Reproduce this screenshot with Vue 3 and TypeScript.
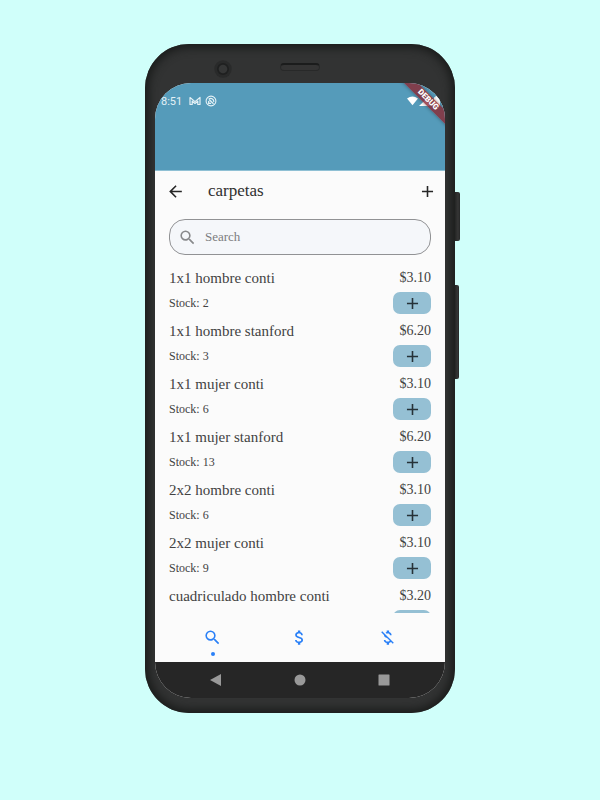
<script setup lang="ts">
import { ref } from 'vue'

interface Product {
  name: string
  price: number
  stock?: number
}

const title = 'carpetas'
const query = ref('')
const products = ref<Product[]>([
  { name: '1x1 hombre conti', stock: 2, price: 3.1 },
  { name: '1x1 hombre stanford', stock: 3, price: 6.2 },
  { name: '1x1 mujer conti', stock: 6, price: 3.1 },
  { name: '1x1 mujer stanford', stock: 13, price: 6.2 },
  { name: '2x2 hombre conti', stock: 6, price: 3.1 },
  { name: '2x2 mujer conti', stock: 9, price: 3.1 },
  { name: 'cuadriculado hombre conti', price: 3.2 },
])

const icons = {
  back: 'M20 11H7.83l5.59-5.59L12 4l-8 8 8 8 1.41-1.41L7.83 13H20v-2z',
  add: 'M19 13h-6v6h-2v-6H5v-2h6V5h2v6h6v2z',
  search:
    'M15.5 14h-.79l-.28-.27A6.471 6.471 0 0 0 16 9.5 6.5 6.5 0 1 0 9.5 16c1.61 0 3.09-.59 4.23-1.57l.27.28v.79l5 4.99L20.49 19l-4.99-5zm-6 0C7.01 14 5 11.99 5 9.5S7.01 5 9.5 5 14 7.01 14 9.5 11.99 14 9.5 14z',
  money:
    'M11.8 10.9c-2.27-.59-3-1.2-3-2.15 0-1.09 1.01-1.85 2.7-1.85 1.78 0 2.44.85 2.5 2.1h2.21c-.07-1.72-1.12-3.3-3.21-3.81V3h-3v2.16c-1.94.42-3.5 1.68-3.5 3.61 0 2.31 1.91 3.46 4.7 4.13 2.5.6 3 1.48 3 2.41 0 .69-.49 1.79-2.7 1.79-2.06 0-2.87-.92-2.98-2.1h-2.2c.12 2.19 1.76 3.42 3.68 3.83V21h3v-2.15c1.95-.37 3.5-1.5 3.5-3.55 0-2.84-2.43-3.81-4.7-4.4z',
  moneyOff:
    'M12.5 6.9c1.78 0 2.44.85 2.5 2.1h2.21c-.07-1.72-1.12-3.3-3.21-3.81V3h-3v2.16c-.53.12-1.03.3-1.48.54l1.47 1.47c.41-.17.91-.27 1.51-.27zM5.33 4.06L4.06 5.33 7.5 8.77c0 2.08 1.56 3.21 3.91 3.91l3.51 3.51c-.34.48-1.05.91-2.42.91-2.06 0-2.87-.92-2.98-2.1h-2.2c.12 2.19 1.76 3.42 3.68 3.83V21h3v-2.15c.96-.18 1.82-.55 2.45-1.12l2.22 2.22 1.27-1.27L5.33 4.06z',
}

const tabs = [
  { label: 'Buscar', icon: icons.search },
  { label: 'Ventas', icon: icons.money },
  { label: 'Gastos', icon: icons.moneyOff },
]
const activeTab = ref(0)

function addStock(product: Product) {
  product.stock = (product.stock ?? 0) + 1
}
</script>

<template>
  <main class="page">
    <div class="phone">
      <span class="side-button power"></span>
      <span class="side-button volume"></span>

      <div class="bezel-top">
        <svg class="camera" viewBox="0 0 18 18" aria-hidden="true">
          <circle cx="9" cy="9" r="8.700" fill="#292a2a" />
          <circle cx="9" cy="9" r="6" fill="#1f2020" />
          <circle cx="9" cy="9" r="4.300" fill="#353636" />
        </svg>
        <span class="speaker"></span>
      </div>

      <div class="screen">
        <header class="status">
          <span class="clock">8:51</span>
          <svg class="notice" viewBox="0 0 12 12" aria-hidden="true">
            <path d="M1 9.500V2.500L6 6.600l5-4.100v7H8.800V6.200L6 8.500 3.200 6.200v3.300z" fill="none" stroke="#e4f1f6" stroke-width="1.200" stroke-linejoin="round" />
          </svg>
          <svg class="notice" viewBox="0 0 12 12" aria-hidden="true">
            <circle cx="6" cy="6" r="4.900" fill="none" stroke="#e4f1f6" stroke-width="1.100" />
            <path d="M3.800 4.300A2.900 2.900 0 0 1 8.700 6.800M3.800 4.300l4.700 4.400M3.700 6v2.300h2.400" fill="none" stroke="#e4f1f6" stroke-width="1.300" />
          </svg>
          <svg class="signals" viewBox="0 0 34 12" aria-hidden="true">
            <path d="M0 3.500Q5.500-.5 11 3.500L5.500 10.200z" fill="#fff" />
            <path d="M12 11L22.500 1v10z" fill="#fff" />
            <path d="M27 2.200h1.500V1h3v1.200H33V11h-6z" fill="#fff" />
          </svg>
          <span class="ribbon">DEBUG</span>
        </header>

        <div class="toolbar">
          <button class="icon-button" type="button" aria-label="Volver">
            <svg class="icon" viewBox="0 0 24 24"><path :d="icons.back" /></svg>
          </button>
          <h1 class="title">{{ title }}</h1>
          <button class="icon-button" type="button" aria-label="Nuevo">
            <svg class="icon" viewBox="0 0 24 24"><path :d="icons.add" /></svg>
          </button>
        </div>

        <label class="search">
          <svg class="icon" viewBox="0 0 24 24" aria-hidden="true"><path :d="icons.search" /></svg>
          <input v-model="query" class="search-input" type="text" placeholder="Search" aria-label="Search" />
        </label>

        <ul class="products">
          <li v-for="product in products" :key="product.name" class="product">
            <span class="name">{{ product.name }}</span>
            <span class="price">${{ product.price.toFixed(2) }}</span>
            <span class="stock"><template v-if="product.stock !== undefined">Stock: {{ product.stock }}</template></span>
            <button class="add" type="button" :aria-label="'Agregar ' + product.name" @click="addStock(product)">
              <svg class="icon" viewBox="0 0 24 24"><path :d="icons.add" /></svg>
            </button>
          </li>
        </ul>

        <nav class="tabs">
          <button
            v-for="(tab, index) in tabs"
            :key="tab.label"
            class="tab"
            :class="{ active: index === activeTab }"
            type="button"
            :aria-label="tab.label"
            @click="activeTab = index"
          >
            <svg class="icon" viewBox="0 0 24 24"><path :d="tab.icon" /></svg>
            <span class="dot"></span>
          </button>
        </nav>

        <div class="system">
          <svg class="key" viewBox="0 0 12 12" aria-hidden="true"><path d="M11 0v12L0 6z" /></svg>
          <svg class="key" viewBox="0 0 12 12" aria-hidden="true"><circle cx="6" cy="6" r="5.500" /></svg>
          <svg class="key" viewBox="0 0 12 12" aria-hidden="true"><rect x=".5" y=".5" width="11" height="11" rx=".5" /></svg>
        </div>
      </div>
    </div>
  </main>
</template>

<style>
body {
  margin: 0;
  background: #d0fffa;
}
</style>

<style scoped>
.page {
  box-sizing: border-box;
  display: flex;
  justify-content: center;
  height: 100vh;
  min-height: 480px;
  padding: 44px 16px 87px;
  font-family: 'Liberation Serif', 'Times New Roman', serif;
  color: #424242;
}

button {
  display: flex;
  align-items: center;
  justify-content: center;
  padding: 0;
  border: 0;
  background: none;
  color: inherit;
}

.phone {
  position: relative;
  box-sizing: border-box;
  display: flex;
  flex-direction: column;
  width: 100%;
  max-width: 310px;
  padding: 0 10px 15px;
  border-radius: 44px;
  background: #323333;
  box-shadow: inset 0 0 8px 4px #1b1d1c;
}

.side-button {
  position: absolute;
  left: 100%;
  width: 4px;
  border-radius: 0 2px 2px 0;
  background: linear-gradient(90deg, #242524, #363636 60%, #262727);
}

.power {
  top: 148px;
  width: 5px;
  height: 49px;
}

.volume {
  top: 241px;
  height: 94px;
}

.bezel-top {
  display: grid;
  grid-template-columns: 1fr 40px 1fr;
  align-items: center;
  height: 39px;
}

.camera {
  width: 18px;
  height: 18px;
  margin: 11px 0 0 59px;
}

.speaker {
  box-sizing: border-box;
  height: 8px;
  margin-top: 7px;
  border: 1px solid #282929;
  border-top: 2px solid #1b1c1c;
  border-radius: 4px;
  background: #343434;
}

.screen {
  flex: 1;
  display: flex;
  flex-direction: column;
  min-height: 0;
  overflow: hidden;
  border-radius: 36px;
  background: #fbfbfb;
}

.status {
  position: relative;
  box-sizing: border-box;
  flex: none;
  display: flex;
  align-items: flex-start;
  height: 88px;
  padding: 12px 4px 0 6px;
  overflow: hidden;
  border-bottom: 1px solid #8fc0d4;
  background: #559bba;
}

.clock {
  width: 28px;
  font: 11px/13px Roboto, sans-serif;
  color: #e4f1f6;
}

.notice {
  width: 12px;
  height: 12px;
  margin-right: 4px;
}

.signals {
  width: 34px;
  height: 12px;
  margin-left: auto;
}

.ribbon {
  position: absolute;
  top: 12px;
  right: -23px;
  width: 80px;
  background: rgba(139, 40, 50, 0.8);
  box-shadow: 0 0 4px rgba(0, 0, 0, 0.4);
  color: #fff;
  font: 900 8px/10px Roboto, sans-serif;
  text-align: center;
  transform: rotate(45deg);
}

.icon {
  display: block;
  flex: none;
  width: 19px;
  height: 19px;
  fill: currentColor;
}

.toolbar {
  flex: none;
  display: flex;
  align-items: center;
  height: 40px;
  padding: 0 8px 0 11px;
  color: #262626;
}

.icon-button {
  width: 19px;
  height: 32px;
}

.title {
  flex: 1;
  margin: 0 0 0 23px;
  font-size: 17px;
  line-height: 24px;
  font-weight: 400;
  color: #303030;
}

.search {
  box-sizing: border-box;
  flex: none;
  display: flex;
  align-items: center;
  gap: 8px;
  height: 36px;
  margin: 8px 14px 0;
  padding: 0 8px;
  border: 1px solid #919294;
  border-radius: 16px;
  background: #f5f7fa;
  color: #88898b;
}

.search-input {
  flex: 1;
  min-width: 0;
  padding: 0;
  border: 0;
  outline: 0;
  background: none;
  font: inherit;
  font-size: 13px;
  color: #3c3c3c;
}

.search-input::placeholder {
  color: #7c7d7f;
  opacity: 1;
}

.products {
  flex: 1;
  min-height: 0;
  margin: 11px 0 0;
  padding: 0 14px;
  overflow: hidden;
  list-style: none;
}

.product {
  display: grid;
  grid-template-columns: 1fr auto;
  grid-template-rows: 24px 22px;
  row-gap: 2px;
  align-items: center;
  margin-bottom: 5px;
}

.name {
  font-size: 15px;
}

.price {
  font-size: 14px;
  text-align: right;
}

.stock {
  font-size: 12px;
}

.add {
  justify-self: end;
  width: 38px;
  height: 22px;
  border-radius: 7px;
  background: #95c0d4;
  color: #263238;
}

.tabs {
  flex: none;
  display: grid;
  grid-template-columns: repeat(3, 1fr);
  height: 49px;
  padding: 0 14px;
  color: #2a80f7;
}

.tab {
  flex-direction: column;
  gap: 5px;
  padding-top: 9px;
}

.dot {
  width: 4px;
  height: 4px;
  border-radius: 50%;
}

.active .dot {
  background: currentColor;
}

.system {
  flex: none;
  display: grid;
  grid-template-columns: repeat(3, 84px);
  align-items: center;
  justify-content: center;
  justify-items: center;
  height: 36px;
  background: #262626;
  fill: #999;
}

.key {
  width: 12px;
  height: 12px;
}
</style>
